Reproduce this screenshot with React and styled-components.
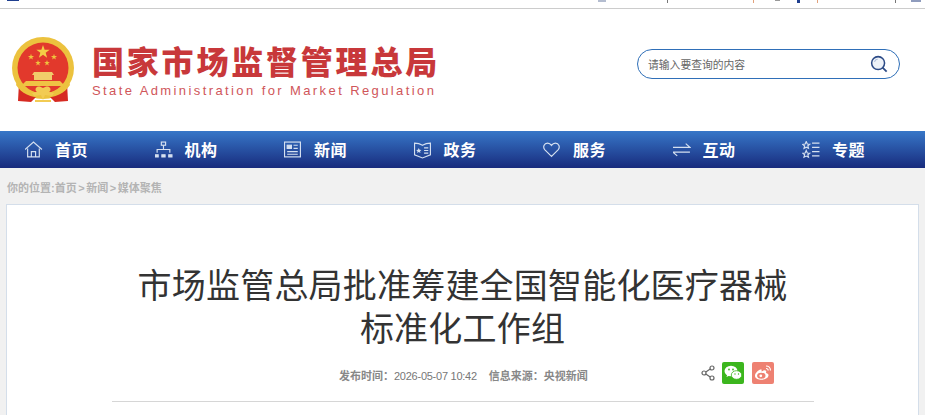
import React from "react";
import styled, { createGlobalStyle } from "styled-components";

const Global = createGlobalStyle`
  html, body { margin: 0; padding: 0; background: #f1f1f1; overflow: hidden; }
  body { font-family: "Liberation Sans", "Noto Sans CJK SC", sans-serif; }
`;
const Page = styled.div`width: 925px; height: 415px; overflow: hidden; background: #f1f1f1;`;
const TopStrip = styled.div`
  height: 8px; background: #fff; border-bottom: 1px solid #ccc; position: relative;
`;
const StripMark = styled.i`
  position: absolute; top: 0; left: ${p => p.$x}px; width: ${p => p.$w}px; height: ${p => p.$h || 2}px; background: ${p => p.$c};
`;
const Header = styled.header`
  height: 122px; background: #fff; display: flex; align-items: flex-start; justify-content: space-between;
  padding: 28px 25px 0 11px; box-sizing: border-box;
`;
const Brand = styled.div`display: flex; align-items: flex-start; gap: 17px;`;
const Emblem = styled.svg`width: 64px; height: 66px; flex: none;`;
const BrandText = styled.div`display: flex; flex-direction: column; padding-top: 1px;`;
const BrandCn = styled.div`
  font: 900 32px/44px "Noto Sans CJK SC", sans-serif; color: #c8383a; letter-spacing: 2.8px; white-space: nowrap; width: 348px;
`;
const BrandEn = styled.div`
  font: 400 13px/14px "Liberation Sans", sans-serif; color: #d0565a; letter-spacing: 2.4px; white-space: nowrap; margin-top: 2px;
`;
const Search = styled.div`
  width: 263px; height: 30px; box-sizing: border-box; margin-top: 12px; border: 1px solid #2f6fb8; border-radius: 15px;
  display: flex; align-items: center; justify-content: space-between; padding: 0 11px 0 10px;
`;
const Placeholder = styled.span`font: 400 10.8px/14px "Noto Sans CJK SC", sans-serif; color: #666;`;
const Nav = styled.nav`
  height: 37px; background: linear-gradient(#3777c8, #182b7d); display: flex; padding-left: 25px;
`;
const NavItem = styled.a`
  width: 129.5px; flex: none; display: flex; align-items: center; gap: 12px; color: #fff;
  font: 700 16px/37px "Noto Sans CJK SC", sans-serif; letter-spacing: .5px; white-space: nowrap;
`;
const NavIcon = styled.svg`
  width: 18px; height: 18px; flex: none; fill: none; stroke: #d5e0f0; stroke-width: 1.1;
`;
const Crumb = styled.div`
  font: 700 11px/16px "Liberation Sans", "Noto Sans CJK SC", sans-serif; color: #b4b4b4; padding: 12px 0 8px 7px; height: 36px; box-sizing: border-box;
  word-spacing: -1.5px;
`;
const Card = styled.main`
  margin: 0 6px; background: #fff; border: 1px solid #d4deea; height: 260px; box-sizing: border-box; padding: 57px 105px 0;
`;
const Title = styled.h1`
  margin: 0; font: 400 34px/43px "Noto Sans CJK SC", sans-serif; color: #333; text-align: center; letter-spacing: .2px; white-space: nowrap;
`;
const MetaRow = styled.div`
  margin-top: 14px; height: 26px; display: flex; align-items: center; padding-left: 227px;
  font: 700 11px/14px "Noto Sans CJK SC", sans-serif; color: #888; white-space: nowrap;
`;
const Stamp = styled.span`font: 400 11px/14px "Liberation Sans", sans-serif; color: #777; letter-spacing: -.25px;`;
const Source = styled.span`margin-left: 12px;`;
const Share = styled.div`display: flex; align-items: center; gap: 7px; margin: -5px 0 0 113px;`;
const ShareBtn = styled.span`
  width: 22px; height: 22px; border-radius: 2px; background: ${p => p.$bg}; display: flex; align-items: center; justify-content: center;
  & + & { margin-left: 1px; }
`;
const Rule = styled.div`height: 1px; background: #d6d6d6; margin-top: 13px; width: 702px;`;

const items = [
  ["首页", <><path d="M1 9 9 2l8 7" /><path d="M3.500 8v8h11V8" /><path d="M7 16v-5h4v5" /></>],
  ["机构", <><rect x="7" y="2" width="4" height="3" /><path d="M9 5v4M3 12V9h12v3" /><path d="M1 14h3v2H1zM7.500 14h3v2h-3zM14 14h3v2h-3z" fill="#d5e0f0" /></>],
  ["新闻", <><rect x="1.500" y="2" width="15" height="14" /><rect x="4" y="5" width="4" height="3" fill="#d5e0f0" /><path d="M10 5h4M10 8h4M4 11h10M4 13.500h10" /></>],
  ["政务", <><path d="M1.500 3c3 0 5 .5 7.500 2 2.500-1.500 4.500-2 7.500-2v11l-7.500 3-7.500-3z" /><path d="M10.500 7.500h4M10.500 10h4M10.500 12.500h4" /><path d="m5.500 7.500.8 1.700 1.700.2-1.300 1.200.4 1.800-1.600-1-1.600 1 .4-1.800L3 9.400l1.700-.2z" fill="#d5e0f0" stroke="none" /></>],
  ["服务", <path d="M9 15.500 2.800 9.300C.5 6.800 2 3 5.300 3 7 3 8.200 4 9 5.200 9.800 4 11 3 12.700 3 16 3 17.500 6.800 15.200 9.300z" />],
  ["互动", <><path d="M1 7h16l-4-3.500" /><path d="M17 11.500H1l4 3.500" /></>],
  ["专题", <><path d="m5 1.500 1 2.300 2.300.2-1.800 1.500.6 2.300L5 6.800 2.900 8l.6-2.300L1.700 4.200 4 3.800z" /><path d="m5 10 1 2.300 2.300.2-1.800 1.500.6 2.300L5 15.200l-2.100 1.100.6-2.300-1.800-1.500 2.300-.2z" /><path d="M10.500 3h7M10.500 7h7M10.500 11h7M10.500 15h7" /></>],
];

const star = (x, y, r) => {
  const pts = [];
  for (let i = 0; i < 10; i++) {
    const a = -Math.PI / 2 + (i * Math.PI) / 5;
    const d = i % 2 ? r * 0.4 : r;
    pts.push(`${(x + d * Math.cos(a)).toFixed(2)},${(y + d * Math.sin(a)).toFixed(2)}`);
  }
  return pts.join(" ");
};

export default function App() {
  return (
    <Page>
      <Global />
      <TopStrip>
        <StripMark $x={7} $w={12} $h={1} $c="#1f3f8f" />
        <StripMark $x={598} $w={8} $c="#b4bdd0" />
        <StripMark $x={667} $w={1} $h={3} $c="#777" />
        <StripMark $x={753} $w={1} $h={3} $c="#e2a27c" />
        <StripMark $x={775} $w={5} $h={1} $c="#999" />
        <StripMark $x={797} $w={3} $h={3} $c="#1f3f8f" />
        <StripMark $x={817} $w={1} $h={3} $c="#e2a27c" />
        <StripMark $x={895} $w={1} $h={3} $c="#777" />
        <StripMark $x={911} $w={10} $c="#8f9cbd" />
      </TopStrip>
      <Header>
        <Brand>
          <Emblem viewBox="0 0 64 66">
            <circle cx="32" cy="31" r="31" fill="#ecc23e" />
            <circle cx="32" cy="31" r="25.500" fill="#e2392c" />
            <polygon points={star(32, 15, 7)} fill="#f3cd46" />
            <polygon points={star(20, 20, 3.200)} fill="#efc23e" />
            <polygon points={star(43, 20, 3.200)} fill="#efc23e" />
            <polygon points={star(27, 26, 3)} fill="#efc23e" />
            <polygon points={star(36, 26, 3)} fill="#efc23e" />
            <path d="M23 35h18l2 3h-2v5H23v-5h-2z" fill="#f1cc6a" />
            <path d="M15 44h34l3 3v2H12v-2z" fill="#efc344" />
            <path d="M8 46 7 64l13 1 6-6c-8-2-14-6-18-13zM56 46l1 18-13 1-6-6c8-2 14-6 18-13z" fill="#d62a22" />
            <path d="M7 42c4 9 13 14 25 14s21-5 25-14l2 6c-5 8-15 13-27 13S10 56 5 48z" fill="#ecc23e" />
            <path d="M26 50c2-1 4 0 6 1 2-1 4-2 6-1 2 1 2 4 0 5l5 1-2 3-7-1-2 5-2-5-7 1-2-3 5-1c-2-1-2-4 0-5z" fill="#f2cb53" />
            <path d="M24 63h16v2H24z" fill="#f2cb53" />
          </Emblem>
          <BrandText>
            <BrandCn>国家市场监督管理总局</BrandCn>
            <BrandEn>State Administration for Market Regulation</BrandEn>
          </BrandText>
        </Brand>
        <Search>
          <Placeholder>请输入要查询的内容</Placeholder>
          <svg width="18" height="18" viewBox="0 0 20 20">
            <circle cx="9" cy="9" r="7.200" fill="#eef2f8" stroke="#2c4a86" strokeWidth="1.700" />
            <path d="M5 7.500C5.500 6 7 4.800 8.500 4.800" fill="none" stroke="#a9bad8" strokeWidth="1.200" />
            <path d="m14 14 4.500 4.500" stroke="#2c4a86" strokeWidth="2" />
          </svg>
        </Search>
      </Header>
      <Nav>
        {items.map(([label, icon]) => (
          <NavItem key={label}>
            <NavIcon viewBox="1 1 17 17">{icon}</NavIcon>
            {label}
          </NavItem>
        ))}
      </Nav>
      <Crumb>你的位置:首页 &gt; 新闻 &gt; 媒体聚焦</Crumb>
      <Card>
        <Title>市场监管总局批准筹建全国智能化医疗器械<br />标准化工作组</Title>
        <MetaRow>
          <span>发布时间：<Stamp>2026-05-07 10:42</Stamp></span>
          <Source>信息来源：央视新闻</Source>
          <Share>
            <svg width="14" height="16" viewBox="0 0 14 16" fill="none" stroke="#666" strokeWidth="1.200">
              <circle cx="11" cy="3" r="2" /><circle cx="3" cy="8" r="2" /><circle cx="11" cy="13" r="2" />
              <path d="M9.200 4 4.800 7M4.800 9l4.400 3" />
            </svg>
            <ShareBtn $bg="#3cb61e">
              <svg width="18" height="16" viewBox="0 0 18 16" fill="#fff">
                <ellipse cx="7" cy="6" rx="6.500" ry="5.300" />
                <path d="m3.500 9-1 3 3-1.500z" />
                <ellipse cx="12.500" cy="10" rx="5.200" ry="4.300" stroke="#3cb61e" strokeWidth=".8" />
                <circle cx="5" cy="4.500" r=".9" fill="#3cb61e" /><circle cx="9" cy="4.500" r=".9" fill="#3cb61e" />
                <circle cx="11" cy="9" r=".7" fill="#3cb61e" /><circle cx="14.500" cy="9" r=".7" fill="#3cb61e" />
              </svg>
            </ShareBtn>
            <ShareBtn $bg="#ee8172">
              <svg width="18" height="16" viewBox="0 0 18 16" fill="none">
                <path d="M7.500 4C3.500 5.500.8 8.500 1 11c.2 2.800 4 4 7 3.800 3.500-.2 6.500-2.200 6.500-4.500 0-1.500-1.500-2-2.500-2.300.5-1.300.3-2.200-.5-2.500-1-.4-2.500 0-4 1 .3-1.300 0-2.800-.5-2.500z" fill="#fff" />
                <ellipse cx="7.300" cy="10.700" rx="4.200" ry="3" fill="#ee8172" />
                <circle cx="6.800" cy="10.800" r="1.400" fill="#fff" />
                <path d="M12 1c2.500 0 4.500 1.800 4.500 4.500M12 3.500c1.200 0 2.200 1 2.200 2" stroke="#fff" strokeWidth="1.200" />
              </svg>
            </ShareBtn>
          </Share>
        </MetaRow>
        <Rule />
      </Card>
    </Page>
  );
}
